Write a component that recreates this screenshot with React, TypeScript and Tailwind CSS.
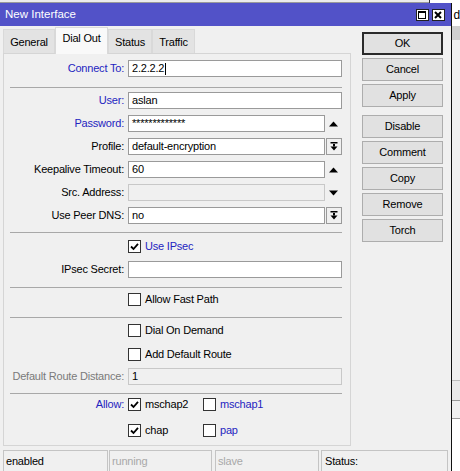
import React from "react";

const BLUE = "text-[#2424c0]";

function Input({ w, text, disabled, caret }: { w: number; text?: string; disabled?: boolean; caret?: boolean }) {
  return (
    <div
      style={{ width: w }}
      className={`h-[17px] border ${disabled ? "bg-[#f0f0f0] border-[#c8c8c8]" : "bg-white border-[#9a9a9a]"} pl-[3px] flex items-center leading-none text-black whitespace-nowrap overflow-hidden`}
    >
      {text}
      {caret && <span className="inline-block w-px h-[12px] bg-black ml-px" />}
    </div>
  );
}

function UpArrow() {
  return (
    <div className="w-[17px] h-[17px] flex items-center justify-center">
      <svg width="9" height="6" viewBox="0 0 9 6"><path d="M0 5.5 L4.5 0.5 L9 5.5 Z" fill="#000" /></svg>
    </div>
  );
}
function DownArrow() {
  return (
    <div className="w-[17px] h-[17px] flex items-center justify-center">
      <svg width="9" height="6" viewBox="0 0 9 6"><path d="M0 0.5 L4.5 5.5 L9 0.5 Z" fill="#000" /></svg>
    </div>
  );
}
function DropBtn() {
  return (
    <div className="ml-px w-[16px] h-[17px] bg-[#f0f0f0] border border-[#9a9a9a] flex items-center justify-center">
      <svg width="8" height="9" viewBox="0 0 8 9">
        <rect x="0.5" y="0" width="7" height="1.5" fill="#000" />
        <rect x="3" y="2" width="2" height="2.5" fill="#000" />
        <path d="M0.5 4.5 L7.5 4.5 L4 8.5 Z" fill="#000" />
      </svg>
    </div>
  );
}

function Row({ label, color, mt, children }: { label: string; color?: string; mt: number; children: React.ReactNode }) {
  return (
    <div className="flex items-center h-[17px]" style={{ marginTop: mt }}>
      <div className={`w-[120px] text-right whitespace-nowrap ${color ?? "text-black"}`}>{label}</div>
      <div className="ml-[4px] flex items-center">{children}</div>
    </div>
  );
}

function Sep({ mt }: { mt: number }) {
  return <div className="ml-[6px] w-[332px] h-px bg-[#a8a8a8]" style={{ marginTop: mt }} />;
}

function Check({ checked }: { checked?: boolean }) {
  return (
    <div className="w-[13px] h-[13px] bg-white border border-[#333] flex items-center justify-center shrink-0">
      {checked && (
        <svg width="9" height="9" viewBox="0 0 9 9">
          <path d="M1 4.5 L3.5 7 L8 1.8" stroke="#000" strokeWidth="1.8" fill="none" />
        </svg>
      )}
    </div>
  );
}

function CheckItem({ label, checked, color }: { label: string; checked?: boolean; color?: string }) {
  return (
    <div className="flex items-center">
      <Check checked={checked} />
      <span className={`ml-[4px] whitespace-nowrap ${color ?? "text-black"}`}>{label}</span>
    </div>
  );
}

function CheckRow({ mt, children }: { mt: number; children: React.ReactNode }) {
  return (
    <div className="flex items-center h-[17px] pl-[124px]" style={{ marginTop: mt }}>
      {children}
    </div>
  );
}

function Btn({ label, ok, mt }: { label: string; ok?: boolean; mt: number }) {
  return (
    <div
      style={{ marginTop: mt }}
      className={`w-[81px] h-[23px] flex items-center justify-center bg-[#e1e1e1] ${ok ? "border-2 border-[#2a2a2a]" : "border border-[#adadad]"} text-black`}
    >
      {label}
    </div>
  );
}

function Tab({ label, active, w }: { label: string; active?: boolean; w: number }) {
  return active ? (
    <div style={{ width: w }} className="h-[27px] bg-[#f9f9f9] border border-b-0 border-[#d9d9d9] flex justify-center pt-[5px] relative z-10 -mb-px">
      {label}
    </div>
  ) : (
    <div style={{ width: w }} className="h-[24px] bg-[#e3e3e3] border border-b-0 border-[#d9d9d9] flex justify-center pt-[7px]">
      {label}
    </div>
  );
}

export default function App() {
  return (
    <div className="w-[460px] h-[471px] overflow-hidden bg-[#f0f0f0] flex flex-col font-['Liberation_Sans',Arial,sans-serif] text-[11px] tracking-[-0.2px] leading-none text-black">
      {/* top strip */}
      <div className="h-[3px] flex shrink-0">
        <div className="w-[429px] bg-[#ececec] border-b border-[#9a9a9a]" />
        <div className="w-px bg-[#333]" />
        <div className="flex-1 bg-white" />
      </div>
      <div className="flex flex-1 min-h-0">
        {/* window */}
        <div className="w-[452px] flex flex-col bg-[#f0f0f0]">
          <div className="h-[23px] bg-[#5252c8] flex items-center pl-[5px] pr-[6px] shrink-0">
            <span className="text-white text-[11.5px] tracking-normal">New Interface</span>
            <div className="ml-auto flex gap-[3px]">
              <div className="w-[13px] h-[12px] bg-white border border-[#222] flex items-center justify-center">
                <div className="w-[8px] h-[8px] border border-black border-t-2" />
              </div>
              <div className="w-[13px] h-[12px] bg-white border border-[#222] flex items-center justify-center">
                <svg width="8" height="8" viewBox="0 0 8 8"><path d="M1 1 L7 7 M7 1 L1 7" stroke="#000" strokeWidth="2" /></svg>
              </div>
            </div>
          </div>
          <div className="flex flex-1 min-h-0">
            {/* left part */}
            <div className="ml-[3px] w-[348px] flex flex-col">
              <div className="h-[27px] flex items-end shrink-0">
                <Tab label="General" w={52} />
                <Tab label="Dial Out" w={53} active />
                <Tab label="Status" w={44} />
                <Tab label="Traffic" w={43} />
              </div>
              <div className="h-[393px] border border-[#d5d5d5] bg-[#f0f0f0] flex flex-col">
                <Row label="Connect To:" color={BLUE} mt={6}>
                  <Input w={214} text="2.2.2.2" caret />
                </Row>
                <Sep mt={10} />
                <Row label="User:" color={BLUE} mt={4}>
                  <Input w={214} text="aslan" />
                </Row>
                <Row label="Password:" color={BLUE} mt={6}>
                  <Input w={197} text="*************" />
                  <UpArrow />
                </Row>
                <Row label="Profile:" mt={6}>
                  <Input w={197} text="default-encryption" />
                  <DropBtn />
                </Row>
                <Row label="Keepalive Timeout:" mt={6}>
                  <Input w={197} text="60" />
                  <UpArrow />
                </Row>
                <Row label="Src. Address:" mt={6}>
                  <Input w={197} disabled />
                  <DownArrow />
                </Row>
                <Row label="Use Peer DNS:" mt={6}>
                  <Input w={197} text="no" />
                  <DropBtn />
                </Row>
                <Sep mt={8} />
                <CheckRow mt={5}>
                  <CheckItem label="Use IPsec" checked color={BLUE} />
                </CheckRow>
                <Row label="IPsec Secret:" mt={6}>
                  <Input w={214} />
                </Row>
                <Sep mt={9} />
                <CheckRow mt={3}>
                  <CheckItem label="Allow Fast Path" />
                </CheckRow>
                <Sep mt={9} />
                <CheckRow mt={4}>
                  <CheckItem label="Dial On Demand" />
                </CheckRow>
                <CheckRow mt={7}>
                  <CheckItem label="Add Default Route" />
                </CheckRow>
                <Row label="Default Route Distance:" color="text-[#7a7a7a]" mt={5}>
                  <Input w={214} text="1" disabled />
                </Row>
                <Sep mt={8} />
                <Row label="Allow:" color={BLUE} mt={2}>
                  <div className="w-[75px]"><CheckItem label="mschap2" checked /></div>
                  <CheckItem label="mschap1" color={BLUE} />
                </Row>
                <CheckRow mt={9}>
                  <div className="w-[75px]"><CheckItem label="chap" checked /></div>
                  <CheckItem label="pap" color={BLUE} />
                </CheckRow>
              </div>
            </div>
            {/* buttons */}
            <div className="ml-[11px] flex flex-col">
              <Btn label="OK" ok mt={6} />
              <Btn label="Cancel" mt={3} />
              <Btn label="Apply" mt={3} />
              <Btn label="Disable" mt={8} />
              <Btn label="Comment" mt={3} />
              <Btn label="Copy" mt={3} />
              <Btn label="Remove" mt={3} />
              <Btn label="Torch" mt={3} />
            </div>
          </div>
          {/* status bar */}
          <div className="h-[21px] mt-[4px] ml-[3px] flex shrink-0">
            <div className="w-[105px] border border-b-0 border-[#c4c4c4] pl-[2px] pt-[5px]">enabled</div>
            <div className="w-[103px] ml-px border border-b-0 border-[#c4c4c4] pl-[2px] pt-[5px] text-[#a8a8a8]">running</div>
            <div className="w-[104px] ml-[3px] border border-b-0 border-[#c4c4c4] pl-[2px] pt-[5px] text-[#a8a8a8]">slave</div>
            <div className="w-[127px] ml-[2px] border border-b-0 border-[#c4c4c4] pl-[3px] pt-[5px]">Status:</div>
          </div>
        </div>
        <div className="w-[1px] bg-[#111]" />
        {/* background window */}
        <div className="flex-1 flex flex-col">
          <div className="h-[23px] bg-white pl-[2px] pt-[6px] text-[12px]">d</div>
          <div className="h-[14px] bg-[#cfcfcf]" />
          <div className="h-[340px] bg-[#f0f0f0]" />
          <div className="h-[20px] bg-[#eaeaea] border-t border-[#bdbdbd]" />
          <div className="h-[3px] border-t border-[#9a9a9a]" />
          <div className="h-[16px] bg-[#f0f0f0] border-b border-[#9a9a9a]" />
          <div className="flex-1 bg-white" />
        </div>
      </div>
    </div>
  );
}
